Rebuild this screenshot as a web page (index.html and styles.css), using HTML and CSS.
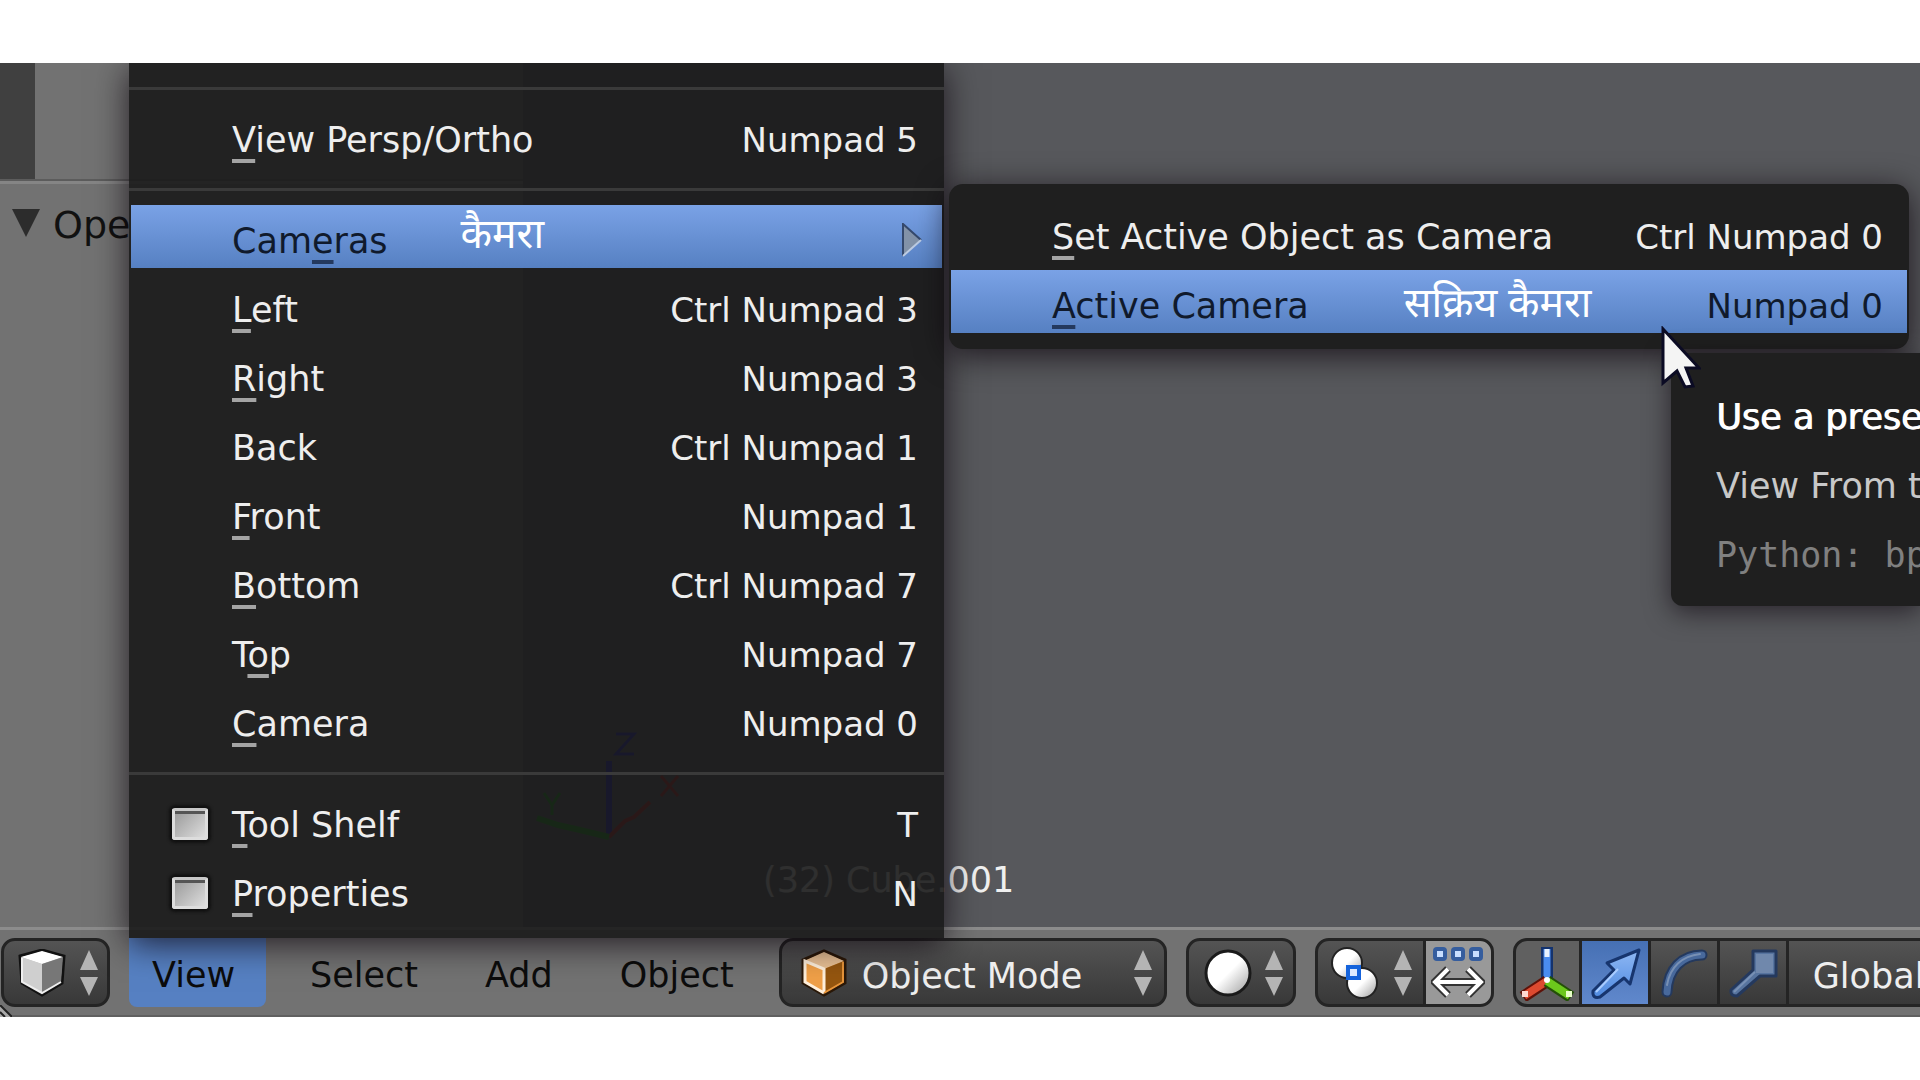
FILE: index.html
```html
<!DOCTYPE html>
<html lang="en">
<head>
<meta charset="utf-8">
<title>3D View</title>
<link rel="stylesheet" href="styles.css">
</head>
<body>
<svg class="defs" aria-hidden="true">
  <defs>
    <linearGradient id="ball" x1="0" y1="0" x2="1" y2="1"><stop offset=".5" stop-color="#fff"/><stop offset="1" stop-color="#999"/></linearGradient>
    <linearGradient id="steel" x1="0" y1="0" x2="0" y2="1"><stop offset="0" stop-color="#8fb8f4"/><stop offset="1" stop-color="#4f8ae0"/></linearGradient>
    <symbol id="updown" viewBox="0 0 18 48"><path d="M9 1 18 21H0ZM0 28H18L9 47Z" fill="#b4b4b4"/></symbol>
  </defs>
</svg>
<main class="app">
  <div class="workspace">
    <aside class="shelf">
      <div class="shelf-top"><div class="tabs"></div></div>
      <div class="shelf-panel">
        <svg class="fold" viewBox="0 0 28 28"><path d="M0 0H28L14 28Z" fill="#2c2c2c"/></svg>
        <span>Operator</span>
      </div>
    </aside>
    <section class="viewport">
      <svg class="axes" viewBox="0 0 150 110" fill="none">
        <path d="M79 107V31" stroke="#1010c8" stroke-width="6"/>
        <path d="M79 107 95 91 104 87 120 72" stroke="#c01010" stroke-width="4"/>
        <path d="M79 107 50 100 28 95 7 88" stroke="#08a008" stroke-width="6"/>
        <path d="M86 4H104L86 24H104" stroke="#1010c8" stroke-width="3"/>
        <path d="M131 46 148 66M148 46 131 66" stroke="#c01010" stroke-width="3"/>
        <path d="M14 63 22 75 30 63M22 75V85" stroke="#08a008" stroke-width="3"/>
      </svg>
      <p class="object-name">(32) Cube.001</p>
    </section>
  </div>

  <header class="header">
    <button class="control editor-type" aria-label="Editor type">
      <svg class="icon" viewBox="0 0 48 48">
        <path d="M2 7 24 1 46 7 44 34 24 46 4 34Z" fill="#bbb" stroke="#111" stroke-width="3"/>
        <path d="M3 8 24 2 45 8 24 15Z" fill="#fff"/><path d="M3 8 24 15V44L5 33Z" fill="#cfcfcf"/><path d="M45 8 24 15V44L43 33Z" fill="#777"/>
        <path d="M4 9V33L24 44 43 33" fill="none" stroke="#eee" stroke-width="2"/>
      </svg>
      <svg class="updown"><use href="#updown"/></svg>
    </button>
    <nav class="menus">
      <button class="menu-title open">View</button>
      <button class="menu-title">Select</button>
      <button class="menu-title">Add</button>
      <button class="menu-title">Object</button>
    </nav>
    <div class="control mode">
      <svg class="icon" viewBox="0 0 48 48">
        <path d="M3 11 24 2 45 11V34L24 46 3 34Z" fill="#f0a048" stroke="#2a1808" stroke-width="3"/>
        <path d="M4 12 24 3 44 12 24 20Z" fill="#e9c195"/><path d="M24 20 44 12V33L24 44Z" fill="#95560f"/><path d="M4 12 24 20V44L4 33Z" fill="#f0a048"/>
        <path d="M24 44 5 33V12L24 20V44" fill="none" stroke="#fff0dc" stroke-width="3"/><path d="M24 44 43 33V13" fill="none" stroke="#e8953a" stroke-width="2"/>
      </svg>
      <select aria-label="Mode"><option>Object Mode</option></select>
      <svg class="updown"><use href="#updown"/></svg>
    </div>
    <button class="control shading" aria-label="Viewport shading">
      <svg class="icon" viewBox="0 0 48 48"><circle cx="24" cy="24" r="22" fill="url(#ball)" stroke="#1a1a1a" stroke-width="3"/></svg>
      <svg class="updown"><use href="#updown"/></svg>
    </button>
    <div class="group">
      <button class="control pivot" aria-label="Pivot point">
        <svg class="pivot-icon" viewBox="0 0 48 54">
          <circle cx="17" cy="17" r="15" fill="url(#ball)" stroke="#222" stroke-width="2"/><circle cx="32" cy="37" r="15" fill="url(#ball)" stroke="#222" stroke-width="2"/>
          <path d="M18 21H29V32H18Z" fill="#dceaff" stroke="#1463dc" stroke-width="4"/>
        </svg>
        <svg class="updown"><use href="#updown"/></svg>
      </button>
      <button class="control centers" aria-label="Manipulate center points">
        <svg class="centers-icon" viewBox="0 0 54 54">
          <g fill="#c8deff" stroke="#355d9e" stroke-width="4"><rect x="4" y="3" width="10" height="10" rx="2"/><rect x="22" y="3" width="10" height="10" rx="2"/><rect x="40" y="3" width="10" height="10" rx="2"/></g>
          <path d="M17 23 4 36 17 49M37 23 50 36 37 49M5 36H49" fill="none" stroke="#333" stroke-width="8"/>
          <path d="M17 23 4 36 17 49M37 23 50 36 37 49M5 36H49" fill="none" stroke="#fff" stroke-width="4"/>
        </svg>
      </button>
    </div>
    <div class="group manipulators">
      <button class="control tool light" aria-label="Manipulator">
        <svg viewBox="0 0 56 56" fill="none">
          <path d="M28 36V2" stroke="#14336e" stroke-width="12"/><path d="M28 36V4" stroke="#4a8cf0" stroke-width="7"/><path d="M28 4V12" stroke="#e8f2ff" stroke-width="5"/>
          <path d="M28 36 4 52" stroke="#5e1209" stroke-width="12"/><path d="M28 36 5 51" stroke="#dc4a30" stroke-width="8"/><path d="M3 49H9" stroke="#ffd8d0" stroke-width="6"/>
          <path d="M28 36 52 52" stroke="#245008" stroke-width="12"/><path d="M28 36 51 51" stroke="#6cc81c" stroke-width="8"/><path d="M47 49H53" stroke="#e8ffc8" stroke-width="6"/>
          <circle cx="28" cy="35" r="3" fill="#fff"/>
        </svg>
      </button>
      <button class="control tool active" aria-label="Translate">
        <svg viewBox="0 0 56 56"><path d="M52 5 43 39 37 33 13 52Q5 54 6 46L27 25 20 18Z" fill="url(#steel)" stroke="#17356e" stroke-width="3" stroke-linejoin="round"/><path d="M9 47 31 24" stroke="#a9ccff" stroke-width="2"/></svg>
      </button>
      <button class="control tool" aria-label="Rotate">
        <svg viewBox="0 0 56 56" fill="none" stroke-linecap="round"><path d="M11 47C12 24 26 10 46 10" stroke="#24395e" stroke-width="11"/><path d="M11 47C12 24 26 10 46 10" stroke="#48699c" stroke-width="7"/><path d="M11 40C14 22 26 11 44 9" stroke="#7890b4" stroke-width="2"/></svg>
      </button>
      <button class="control tool" aria-label="Scale">
        <svg viewBox="0 0 56 56"><path d="M28 6H51V31H35L12 51Q5 51 6 45L28 25Z" fill="#57749f" stroke="#24395e" stroke-width="3" stroke-linejoin="round"/><path d="M31 9H48V28H31Z" fill="#7088ac"/><path d="M9 47 30 27" stroke="#7890b4" stroke-width="2"/></svg>
      </button>
      <div class="control orientation"><select aria-label="Orientation"><option>Global</option></select></div>
    </div>
    <svg class="corner" viewBox="0 0 12 12"><path d="M0 0 12 12H0Z" fill="#aaa"/><path d="M0 0 12 12M0 7 5 12" stroke="#222" stroke-width="2"/></svg>
  </header>

  <div class="menu view-menu">
    <ul>
      <li class="separator"></li>
      <li><button class="item"><span><u>V</u>iew Persp/Ortho</span><kbd>Numpad 5</kbd></button></li>
      <li class="separator"></li>
      <li class="has-submenu">
        <button class="item selected"><span>Cam<u>e</u>ras</span><span class="hindi" lang="hi">कैमरा</span>
          <svg class="expand" viewBox="0 0 20 34"><path d="M1 1 19 17 1 33Z" fill="#8292a8"/><path d="M1 33V1L19 17" fill="none" stroke="#35496c" stroke-width="2"/><path d="M1 33 19 17" stroke="#bccbe2" stroke-width="2"/></svg>
        </button>
        <div class="menu submenu">
          <ul>
            <li><button class="item"><span><u>S</u>et Active Object as Camera</span><kbd>Ctrl Numpad 0</kbd></button></li>
            <li><button class="item selected"><span><u>A</u>ctive Camera</span><span class="hindi" lang="hi">सक्रिय कैमरा</span><kbd>Numpad 0</kbd></button></li>
          </ul>
        </div>
      </li>
      <li><button class="item"><span><u>L</u>eft</span><kbd>Ctrl Numpad 3</kbd></button></li>
      <li><button class="item"><span><u>R</u>ight</span><kbd>Numpad 3</kbd></button></li>
      <li><button class="item"><span>Back</span><kbd>Ctrl Numpad 1</kbd></button></li>
      <li><button class="item"><span><u>F</u>ront</span><kbd>Numpad 1</kbd></button></li>
      <li><button class="item"><span><u>B</u>ottom</span><kbd>Ctrl Numpad 7</kbd></button></li>
      <li><button class="item"><span>T<u>o</u>p</span><kbd>Numpad 7</kbd></button></li>
      <li><button class="item"><span><u>C</u>amera</span><kbd>Numpad 0</kbd></button></li>
      <li class="separator"></li>
      <li><label class="item check"><input type="checkbox"><span><u>T</u>ool Shelf</span><kbd>T</kbd></label></li>
      <li><label class="item check"><input type="checkbox"><span><u>P</u>roperties</span><kbd>N</kbd></label></li>
    </ul>
  </div>

  <div class="tooltip" role="tooltip">
    <p class="tip-title">Use a preset</p>
    <p class="tip-value">View From the</p>
    <p class="tip-code">Python: bpy</p>
  </div>
  <svg class="cursor" viewBox="0 0 40 64"><path d="M2 3V57L16 45 24 61 32 60 25 42H38Z" fill="#f4f4f4" stroke="#0b0b24" stroke-width="3"/></svg>
</main>
</body>
</html>
```
FILE: styles.css
```css
* { box-sizing: border-box; }

body {
  margin: 0;
  background: #fff;
  font: 35px/69px "DejaVu Sans", sans-serif;
  overflow: hidden;
}

p, ul { margin: 0; padding: 0; list-style: none; }

button, select, kbd { font: inherit; color: inherit; }

button, select {
  appearance: none;
  margin: 0;
  padding: 0;
  border: 0;
  background: none;
  text-align: left;
  white-space: nowrap;
}

.defs { position: absolute; width: 0; height: 0; }

.app {
  position: relative;
  display: flex;
  flex-direction: column;
  min-height: calc(100vh - 126px);
  margin: 63px 0;
  overflow: hidden;
}

.workspace {
  flex: 1;
  display: grid;
  grid-template-columns: 523px 1fr;
}

/* tool shelf */
.shelf { display: flex; flex-direction: column; background: #727272; }
.shelf-top { height: 118px; border-bottom: 2px solid #5c5c5c; }
.tabs { width: 35px; height: 100%; background: #404040; }
.shelf-panel {
  flex: 1;
  display: flex;
  align-items: flex-start;
  gap: 13px;
  padding: 7px 12px;
  border-top: 3px solid #858585;
  color: #111;
  font-size: 38px;
}
.fold { width: 28px; height: 28px; margin-top: 18px; }

/* 3D viewport */
.viewport {
  display: flex;
  flex-direction: column;
  justify-content: flex-end;
  background: #57585c;
  color: #f0f0f0;
}
.axes { width: 150px; height: 110px; margin-left: 7px; }
.object-name { padding: 6px 0 12px 240px; }

/* header bar */
.header {
  position: relative;
  display: flex;
  gap: 19px;
  height: 90px;
  padding: 8px 0 8px 1px;
  border-top: 3px solid #8c8c8c;
  border-bottom: 2px solid #606060;
  background: #727272;
  color: #0c0c0c;
  white-space: nowrap;
}
.menus { display: flex; gap: 21px; padding-right: 3px; }
.menu-title { padding: 3px 23px 0; border-radius: 0 0 8px 8px; }
.menu-title.open { min-width: 137px; background: #5680c2; }

.control {
  display: flex;
  align-items: center;
  justify-content: space-between;
  flex: none;
  padding: 0 12px 0 16px;
  border: 3px solid #242424;
  border-radius: 14px;
  background: linear-gradient(#545454, #383838);
  color: #eee;
}
.icon { width: 48px; height: 48px; }
.updown { width: 18px; height: 48px; }
.editor-type { width: 109px; padding: 0 9px 0 14px; }
.mode { width: 388px; padding-left: 18px; }
.mode select { flex: 1; padding: 7px 0 0 14px; }
.shading { width: 110px; padding: 0 10px 0 15px; }
.group { display: flex; flex: none; }
.group .control { border-radius: 0; margin-right: -3px; }
.group .control:first-child { border-radius: 14px 0 0 14px; }
.group .pivot { width: 111px; padding: 0 11px 0 12px; }
.pivot-icon { width: 48px; height: 54px; }
.group .centers { width: 71px; margin: 0; padding: 0 5px; border-radius: 0 14px 14px 0; background: #999; }
.centers-icon { width: 54px; height: 54px; }
.tool { width: 72px; padding: 0 5px; }
.tool svg { width: 56px; height: 56px; }
.tool.light { width: 69px; padding: 0 3px; background: #606060; }
.tool.active { background: linear-gradient(#4670b4, #6088cc); }
.orientation { width: 240px; padding: 7px 0 0 24px; }
.corner { position: absolute; left: 0; bottom: -2px; width: 12px; height: 12px; }

/* menus */
.menu {
  position: absolute;
  background: rgba(25, 25, 25, .9);
  box-shadow: 0 6px 32px rgba(10, 0, 10, .75);
  color: #eee;
}
.view-menu {
  left: 129px;
  bottom: 79px;
  width: 815px;
  padding: 9px 0 11px;
}
.separator { height: 32px; padding-top: 15px; }
.separator::before { content: ""; display: block; height: 3px; background: #3a3a3a; }
.item {
  display: flex;
  align-items: center;
  width: 100%;
  height: 69px;
  padding: 0 26px 0 103px;
}
.item span, .item kbd { padding-top: 3px; }
.item kbd { margin-left: auto; font-size: 34px; }
.item u {
  text-decoration: underline 4px #a4a4a4;
  text-underline-offset: 7px;
  text-decoration-skip-ink: none;
}
.item.selected {
  background: linear-gradient(#7aa2e6, #5680c2) 2px 0 / calc(100% - 4px) 63px no-repeat;
  color: #101a2c;
}
.selected u { text-decoration-color: #24395e; }
.item .hindi {
  margin-left: 73px;
  padding: 0 0 3px;
  color: #fff;
  font-family: "Noto Sans Devanagari", "Noto Sans", sans-serif;
  font-size: 41px;
}
.has-submenu > .item { padding-right: 22px; }
.expand { width: 20px; height: 34px; margin-left: auto; }
.check { padding-left: 43px; }
.check input {
  appearance: none;
  width: 36px;
  height: 32px;
  margin: 0 24px 0 0;
  border: 3px solid #ddd;
  border-top-color: #c8c8c8;
  border-radius: 3px;
  background: linear-gradient(#555 3px, transparent 3px), linear-gradient(135deg, #999, #ddd);
  box-shadow: 0 0 3px 3px #111;
}

.has-submenu { position: relative; }
.submenu {
  left: 820px;
  top: -21px;
  width: 960px;
  padding: 17px 0 10px;
  border-radius: 14px;
  background: #1f1f1f;
}
.submenu .item .hindi { margin-left: 95px; padding: 6px 0 0; }

.tooltip {
  position: absolute;
  left: 1671px;
  right: 0;
  top: 290px;
  padding: 30px 0 16px 45px;
  border-radius: 0 0 0 12px;
  background: #1f1f1f;
  box-shadow: 0 6px 26px rgba(10, 0, 10, .6);
  white-space: nowrap;
}
.tip-title { color: #fff; text-shadow: 1px 0 #fff; }
.tip-value { color: #c8c8c8; }
.tip-code { color: #808080; font-family: "DejaVu Sans Mono", monospace; }
.cursor { position: absolute; left: 1661px; top: 263px; width: 40px; height: 64px; }
```
